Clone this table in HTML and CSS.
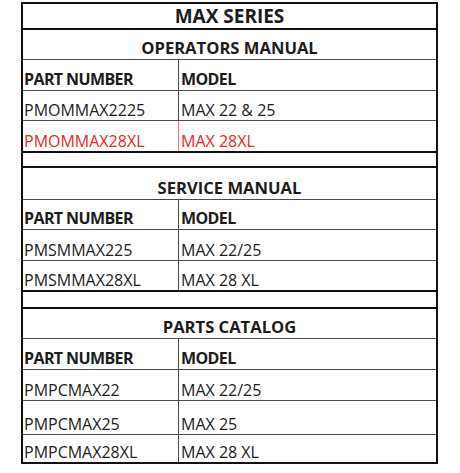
FILE: index.html
```html
<!DOCTYPE html>
<html>
<head>
<meta charset="utf-8">
<link rel="stylesheet" href="styles.css">
</head>
<body>
<div class="sheet">
  <div class="row title h26 thick">MAX SERIES</div>

  <div class="row section h30">OPERATORS MANUAL</div>
  <div class="row pair head h31"><div class="c1">PART NUMBER</div><div class="c2">MODEL</div></div>
  <div class="row pair h30"><div class="c1">PMOMMAX2225</div><div class="c2">MAX 22 &amp; 25</div></div>
  <div class="row pair red h32 thick"><div class="c1">PMOMMAX28XL</div><div class="c2">MAX 28XL</div></div>
  <div class="row blank h15 thick"></div>

  <div class="row section h32">SERVICE MANUAL</div>
  <div class="row pair head h30"><div class="c1">PART NUMBER</div><div class="c2">MODEL</div></div>
  <div class="row pair h31"><div class="c1">PMSMMAX225</div><div class="c2">MAX 22/25</div></div>
  <div class="row pair h31 thick"><div class="c1">PMSMMAX28XL</div><div class="c2">MAX 28 XL</div></div>
  <div class="row blank h17 thick"></div>

  <div class="row section h30">PARTS CATALOG</div>
  <div class="row pair head h31"><div class="c1">PART NUMBER</div><div class="c2">MODEL</div></div>
  <div class="row pair h31"><div class="c1">PMPCMAX22</div><div class="c2">MAX 22/25</div></div>
  <div class="row pair h34"><div class="c1">PMPCMAX25</div><div class="c2">MAX 25</div></div>
  <div class="row pair h29 thick"><div class="c1">PMPCMAX28XL</div><div class="c2">MAX 28 XL</div></div>
</div>
</body>
</html>
```

FILE: styles.css
```css
html, body {
  margin: 0;
  padding: 0;
  background: #ffffff;
}

body {
  font-family: "Open Sans", "DejaVu Sans", sans-serif;
  color: #1c1c1c;
}

.sheet {
  margin: 2px 0 0 21px;
  width: 417px;
  box-sizing: border-box;
  border: 2px solid #111111;
  border-bottom: none;
  display: flex;
  flex-direction: column;
}

.row {
  box-sizing: border-box;
  border-bottom: 1px solid #4a4a4a;
  display: flex;
  align-items: flex-end;
  font-size: 16px;
  line-height: 16px;
}

.thick {
  border-bottom: 2px solid #111111;
}

.title {
  justify-content: center;
  font-weight: 700;
  font-size: 19px;
  line-height: 18px;
  padding-bottom: 3px;
}

.section {
  justify-content: center;
  font-weight: 700;
  font-size: 16.6px;
  padding-bottom: 3px;
}

.pair {
  align-items: stretch;
}

.pair .c1,
.pair .c2 {
  box-sizing: border-box;
  display: flex;
  align-items: flex-end;
  padding: 0 0 2px 1px;
  white-space: nowrap;
}

.pair .c1 {
  width: 156px;
  border-right: 1px solid #4a4a4a;
}

.pair .c2 {
  flex: 1;
  padding-left: 2px;
}

.head {
  font-weight: 700;
  letter-spacing: -0.6px;
}

.head .c1,
.head .c2 {
  padding-bottom: 3px;
}

.red {
  color: #e8262c;
}

.red .c1 {
  border-right-color: #e87a86;
}

.h15 { height: 15px; }
.h17 { height: 17px; }
.h26 { height: 26px; }
.h29 { height: 29px; }
.h30 { height: 30px; }
.h31 { height: 31px; }
.h32 { height: 32px; }
.h34 { height: 34px; }
```
